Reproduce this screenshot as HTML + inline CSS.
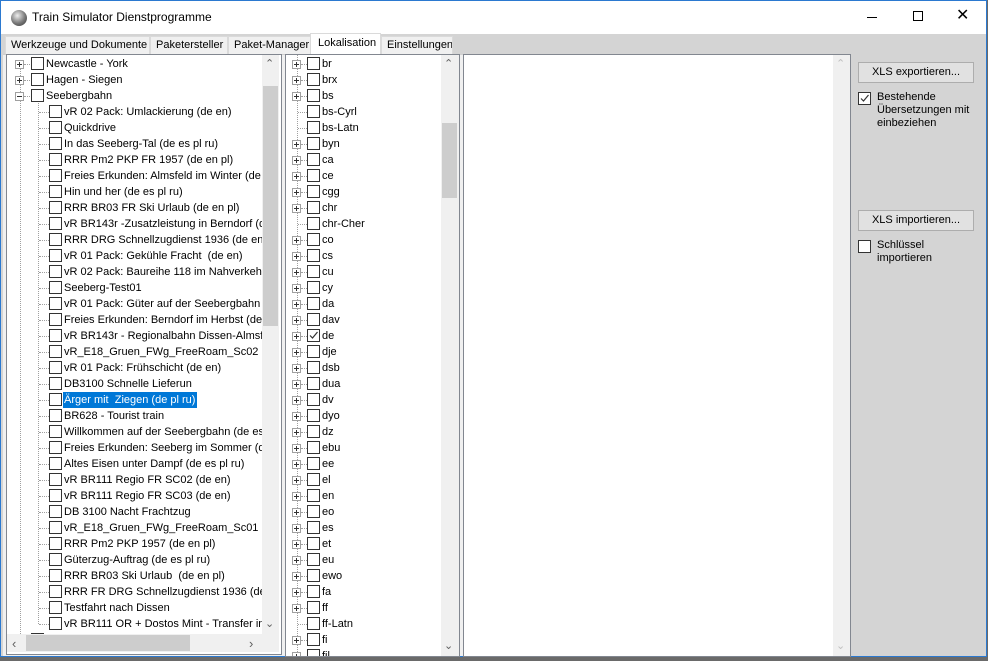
<!DOCTYPE html>
<html><head><meta charset="utf-8"><style>
*{margin:0;padding:0;box-sizing:border-box}
body{width:988px;height:661px;overflow:hidden;position:relative;background:#6a6a6a;font-family:"Liberation Sans",sans-serif;font-size:11px;color:#000}
.win{position:absolute;left:0;top:0;width:987px;height:657px;background:#d4d4d4;border:1px solid #2b79d0}
.title{position:absolute;left:0;top:0;width:985px;height:33px;background:#fff}
.abs{position:absolute}
.tab{position:absolute;top:35px;height:18px;line-height:17px;background:#f0f0f0;border:1px solid #dadada;border-bottom:none;padding-left:5px;font-size:11px;white-space:nowrap;overflow:hidden}
.panel{position:absolute;background:#fff;overflow:hidden}
.r{position:absolute;height:16px;line-height:16px;white-space:nowrap;left:0}
.cb{position:absolute;width:13px;height:13px;border:1px solid #333;background:#fff;top:1px}
.pl{position:absolute;width:9px;height:9px;border:1px solid #a0a0a0;background:#fff;top:4px}
.pl:before{content:"";position:absolute;left:1px;top:3px;width:5px;height:1px;background:#333}
.pl.p:after{content:"";position:absolute;left:3px;top:1px;width:1px;height:5px;background:#333}
.h{position:absolute;top:8px;height:1px;border-top:1px dotted #a0a0a0}
.v{position:absolute;width:1px;border-left:1px dotted #a0a0a0}
.sb{position:absolute;background:#f0f0f0}
.btn{position:absolute;left:857px;width:116px;height:21px;background:#e1e1e1;border:1px solid #adadad;text-align:center;line-height:19px;font-size:11px}
</style></head><body>
<div class="win">
<div class="title">
 <div class="abs" style="left:10px;top:9px;width:16px;height:16px;border-radius:50%;background:radial-gradient(circle at 40% 35%,#eee,#777 55%,#333)"></div>
 <div class="abs" style="left:31px;top:9px;font-size:12px">Train Simulator Dienstprogramme</div>
 <div class="abs" style="left:866px;top:16px;width:10px;height:1px;background:#000"></div>
 <div class="abs" style="left:912px;top:10px;width:10px;height:10px;border:1px solid #000"></div>
 <div class="abs" style="left:955px;top:7px;font-size:16px;line-height:16px">&#x2715;</div>
</div>
<div class="tab" style="left:4px;width:145px">Werkzeuge und Dokumente</div>
<div class="tab" style="left:149px;width:78px">Paketersteller</div>
<div class="tab" style="left:227px;width:83px">Paket-Manager</div>
<div class="tab" style="left:309px;top:32px;height:22px;width:71px;background:#fff;line-height:19px;padding-left:7px">Lokalisation</div>
<div class="tab" style="left:380px;width:72px">Einstellungen</div>
<div class="abs" style="left:2px;top:53px;width:846px;height:602px;background:#f0f0f0;border-top:1px solid #cfcfcf"></div>

<!-- left tree -->
<div class="abs" style="left:5px;top:53px;width:276px;height:601px;border:1px solid #828790;background:#fff"></div>
<div class="panel" style="left:6px;top:54px;width:255px;height:579px">
 <div class="v" style="left:13px;top:13px;height:570px"></div>
 <div class="v" style="left:31px;top:45px;height:524px"></div>
 <div class="r" style="top:1px"><span class="pl p" style="left:8px"></span><span class="h" style="left:17px;width:6px"></span><span class="cb" style="left:24px"></span><span style="position:absolute;left:39px">Newcastle - York</span></div>
 <div class="r" style="top:17px"><span class="pl p" style="left:8px"></span><span class="h" style="left:17px;width:6px"></span><span class="cb" style="left:24px"></span><span style="position:absolute;left:39px">Hagen - Siegen</span></div>
 <div class="r" style="top:33px"><span class="pl" style="left:8px"></span><span class="h" style="left:17px;width:6px"></span><span class="cb" style="left:24px"></span><span style="position:absolute;left:39px">Seebergbahn</span></div>
 <div class="r" style="top:49px"><span class="h" style="left:32px;width:10px"></span><span class="cb" style="left:42px"></span><span style="position:absolute;left:57px">vR 02 Pack: Umlackierung (de en)</span></div>
 <div class="r" style="top:65px"><span class="h" style="left:32px;width:10px"></span><span class="cb" style="left:42px"></span><span style="position:absolute;left:57px">Quickdrive</span></div>
 <div class="r" style="top:81px"><span class="h" style="left:32px;width:10px"></span><span class="cb" style="left:42px"></span><span style="position:absolute;left:57px">In das Seeberg-Tal (de es pl ru)</span></div>
 <div class="r" style="top:97px"><span class="h" style="left:32px;width:10px"></span><span class="cb" style="left:42px"></span><span style="position:absolute;left:57px">RRR Pm2 PKP FR 1957 (de en pl)</span></div>
 <div class="r" style="top:113px"><span class="h" style="left:32px;width:10px"></span><span class="cb" style="left:42px"></span><span style="position:absolute;left:57px">Freies Erkunden: Almsfeld im Winter (de en)</span></div>
 <div class="r" style="top:129px"><span class="h" style="left:32px;width:10px"></span><span class="cb" style="left:42px"></span><span style="position:absolute;left:57px">Hin und her (de es pl ru)</span></div>
 <div class="r" style="top:145px"><span class="h" style="left:32px;width:10px"></span><span class="cb" style="left:42px"></span><span style="position:absolute;left:57px">RRR BR03 FR Ski Urlaub (de en pl)</span></div>
 <div class="r" style="top:161px"><span class="h" style="left:32px;width:10px"></span><span class="cb" style="left:42px"></span><span style="position:absolute;left:57px">vR BR143r -Zusatzleistung in Berndorf (de en)</span></div>
 <div class="r" style="top:177px"><span class="h" style="left:32px;width:10px"></span><span class="cb" style="left:42px"></span><span style="position:absolute;left:57px">RRR DRG Schnellzugdienst 1936 (de en pl)</span></div>
 <div class="r" style="top:193px"><span class="h" style="left:32px;width:10px"></span><span class="cb" style="left:42px"></span><span style="position:absolute;left:57px">vR 01 Pack: Gekühle Fracht&nbsp; (de en)</span></div>
 <div class="r" style="top:209px"><span class="h" style="left:32px;width:10px"></span><span class="cb" style="left:42px"></span><span style="position:absolute;left:57px">vR 02 Pack: Baureihe 118 im Nahverkehr</span></div>
 <div class="r" style="top:225px"><span class="h" style="left:32px;width:10px"></span><span class="cb" style="left:42px"></span><span style="position:absolute;left:57px">Seeberg-Test01</span></div>
 <div class="r" style="top:241px"><span class="h" style="left:32px;width:10px"></span><span class="cb" style="left:42px"></span><span style="position:absolute;left:57px">vR 01 Pack: Güter auf der Seebergbahn (de</span></div>
 <div class="r" style="top:257px"><span class="h" style="left:32px;width:10px"></span><span class="cb" style="left:42px"></span><span style="position:absolute;left:57px">Freies Erkunden: Berndorf im Herbst (de en)</span></div>
 <div class="r" style="top:273px"><span class="h" style="left:32px;width:10px"></span><span class="cb" style="left:42px"></span><span style="position:absolute;left:57px">vR BR143r - Regionalbahn Dissen-Almsfeld</span></div>
 <div class="r" style="top:289px"><span class="h" style="left:32px;width:10px"></span><span class="cb" style="left:42px"></span><span style="position:absolute;left:57px">vR_E18_Gruen_FWg_FreeRoam_Sc02</span></div>
 <div class="r" style="top:305px"><span class="h" style="left:32px;width:10px"></span><span class="cb" style="left:42px"></span><span style="position:absolute;left:57px">vR 01 Pack: Frühschicht (de en)</span></div>
 <div class="r" style="top:321px"><span class="h" style="left:32px;width:10px"></span><span class="cb" style="left:42px"></span><span style="position:absolute;left:57px">DB3100 Schnelle Lieferun</span></div>
 <div class="r" style="top:337px"><span class="h" style="left:32px;width:10px"></span><span class="cb" style="left:42px"></span><span style="position:absolute;left:56px;background:#0078d7;color:#fff;padding:0 2px 0 1px">Ärger mit&nbsp; Ziegen (de pl ru)</span></div>
 <div class="r" style="top:353px"><span class="h" style="left:32px;width:10px"></span><span class="cb" style="left:42px"></span><span style="position:absolute;left:57px">BR628 - Tourist train</span></div>
 <div class="r" style="top:369px"><span class="h" style="left:32px;width:10px"></span><span class="cb" style="left:42px"></span><span style="position:absolute;left:57px">Willkommen auf der Seebergbahn (de es pl ru)</span></div>
 <div class="r" style="top:385px"><span class="h" style="left:32px;width:10px"></span><span class="cb" style="left:42px"></span><span style="position:absolute;left:57px">Freies Erkunden: Seeberg im Sommer (de en)</span></div>
 <div class="r" style="top:401px"><span class="h" style="left:32px;width:10px"></span><span class="cb" style="left:42px"></span><span style="position:absolute;left:57px">Altes Eisen unter Dampf (de es pl ru)</span></div>
 <div class="r" style="top:417px"><span class="h" style="left:32px;width:10px"></span><span class="cb" style="left:42px"></span><span style="position:absolute;left:57px">vR BR111 Regio FR SC02 (de en)</span></div>
 <div class="r" style="top:433px"><span class="h" style="left:32px;width:10px"></span><span class="cb" style="left:42px"></span><span style="position:absolute;left:57px">vR BR111 Regio FR SC03 (de en)</span></div>
 <div class="r" style="top:449px"><span class="h" style="left:32px;width:10px"></span><span class="cb" style="left:42px"></span><span style="position:absolute;left:57px">DB 3100 Nacht Frachtzug</span></div>
 <div class="r" style="top:465px"><span class="h" style="left:32px;width:10px"></span><span class="cb" style="left:42px"></span><span style="position:absolute;left:57px">vR_E18_Gruen_FWg_FreeRoam_Sc01</span></div>
 <div class="r" style="top:481px"><span class="h" style="left:32px;width:10px"></span><span class="cb" style="left:42px"></span><span style="position:absolute;left:57px">RRR Pm2 PKP 1957 (de en pl)</span></div>
 <div class="r" style="top:497px"><span class="h" style="left:32px;width:10px"></span><span class="cb" style="left:42px"></span><span style="position:absolute;left:57px">Güterzug-Auftrag (de es pl ru)</span></div>
 <div class="r" style="top:513px"><span class="h" style="left:32px;width:10px"></span><span class="cb" style="left:42px"></span><span style="position:absolute;left:57px">RRR BR03 Ski Urlaub&nbsp; (de en pl)</span></div>
 <div class="r" style="top:529px"><span class="h" style="left:32px;width:10px"></span><span class="cb" style="left:42px"></span><span style="position:absolute;left:57px">RRR FR DRG Schnellzugdienst 1936 (de en pl)</span></div>
 <div class="r" style="top:545px"><span class="h" style="left:32px;width:10px"></span><span class="cb" style="left:42px"></span><span style="position:absolute;left:57px">Testfahrt nach Dissen</span></div>
 <div class="r" style="top:561px"><span class="h" style="left:32px;width:10px"></span><span class="cb" style="left:42px"></span><span style="position:absolute;left:57px">vR BR111 OR + Dostos Mint - Transfer in</span></div>
 <div class="r" style="top:577px"><span class="pl p" style="left:8px"></span><span class="cb" style="left:24px"></span><span style="position:absolute;left:39px">Heilbronn - Hamburg</span></div>
</div>
<div class="sb" style="left:261px;top:54px;width:17px;height:579px"></div>
<div class="abs" style="left:262px;top:85px;width:15px;height:240px;background:#cdcdcd"></div>
<div class="abs" style="left:264px;top:56px;font-size:11px;color:#606060">&#8963;</div>
<div class="abs" style="left:264px;top:616px;font-size:11px;color:#606060">&#8964;</div>
<div class="sb" style="left:6px;top:633px;width:272px;height:18px"></div>
<div class="abs" style="left:25px;top:634px;width:164px;height:16px;background:#cdcdcd"></div>
<div class="abs" style="left:11px;top:635px;font-size:13px;color:#606060">&#8249;</div>
<div class="abs" style="left:248px;top:635px;font-size:13px;color:#606060">&#8250;</div>

<!-- middle tree -->
<div class="abs" style="left:284px;top:53px;width:175px;height:603px;border:1px solid #828790;background:#fff"></div>
<div class="panel" style="left:285px;top:54px;width:155px;height:601px">
 <div class="v" style="left:11px;top:0px;height:601px"></div>
 <div class="r" style="top:1px"><span class="pl p" style="left:6px"></span><span class="h" style="left:15px;width:6px"></span><span class="cb" style="left:21px"></span><span style="position:absolute;left:36px">br</span></div>
 <div class="r" style="top:17px"><span class="pl p" style="left:6px"></span><span class="h" style="left:15px;width:6px"></span><span class="cb" style="left:21px"></span><span style="position:absolute;left:36px">brx</span></div>
 <div class="r" style="top:33px"><span class="pl p" style="left:6px"></span><span class="h" style="left:15px;width:6px"></span><span class="cb" style="left:21px"></span><span style="position:absolute;left:36px">bs</span></div>
 <div class="r" style="top:49px"><span class="h" style="left:12px;width:9px"></span><span class="cb" style="left:21px"></span><span style="position:absolute;left:36px">bs-Cyrl</span></div>
 <div class="r" style="top:65px"><span class="h" style="left:12px;width:9px"></span><span class="cb" style="left:21px"></span><span style="position:absolute;left:36px">bs-Latn</span></div>
 <div class="r" style="top:81px"><span class="pl p" style="left:6px"></span><span class="h" style="left:15px;width:6px"></span><span class="cb" style="left:21px"></span><span style="position:absolute;left:36px">byn</span></div>
 <div class="r" style="top:97px"><span class="pl p" style="left:6px"></span><span class="h" style="left:15px;width:6px"></span><span class="cb" style="left:21px"></span><span style="position:absolute;left:36px">ca</span></div>
 <div class="r" style="top:113px"><span class="pl p" style="left:6px"></span><span class="h" style="left:15px;width:6px"></span><span class="cb" style="left:21px"></span><span style="position:absolute;left:36px">ce</span></div>
 <div class="r" style="top:129px"><span class="pl p" style="left:6px"></span><span class="h" style="left:15px;width:6px"></span><span class="cb" style="left:21px"></span><span style="position:absolute;left:36px">cgg</span></div>
 <div class="r" style="top:145px"><span class="pl p" style="left:6px"></span><span class="h" style="left:15px;width:6px"></span><span class="cb" style="left:21px"></span><span style="position:absolute;left:36px">chr</span></div>
 <div class="r" style="top:161px"><span class="h" style="left:12px;width:9px"></span><span class="cb" style="left:21px"></span><span style="position:absolute;left:36px">chr-Cher</span></div>
 <div class="r" style="top:177px"><span class="pl p" style="left:6px"></span><span class="h" style="left:15px;width:6px"></span><span class="cb" style="left:21px"></span><span style="position:absolute;left:36px">co</span></div>
 <div class="r" style="top:193px"><span class="pl p" style="left:6px"></span><span class="h" style="left:15px;width:6px"></span><span class="cb" style="left:21px"></span><span style="position:absolute;left:36px">cs</span></div>
 <div class="r" style="top:209px"><span class="pl p" style="left:6px"></span><span class="h" style="left:15px;width:6px"></span><span class="cb" style="left:21px"></span><span style="position:absolute;left:36px">cu</span></div>
 <div class="r" style="top:225px"><span class="pl p" style="left:6px"></span><span class="h" style="left:15px;width:6px"></span><span class="cb" style="left:21px"></span><span style="position:absolute;left:36px">cy</span></div>
 <div class="r" style="top:241px"><span class="pl p" style="left:6px"></span><span class="h" style="left:15px;width:6px"></span><span class="cb" style="left:21px"></span><span style="position:absolute;left:36px">da</span></div>
 <div class="r" style="top:257px"><span class="pl p" style="left:6px"></span><span class="h" style="left:15px;width:6px"></span><span class="cb" style="left:21px"></span><span style="position:absolute;left:36px">dav</span></div>
 <div class="r" style="top:273px"><span class="pl p" style="left:6px"></span><span class="h" style="left:15px;width:6px"></span><span class="cb" style="left:21px"><svg width="11" height="11" style="position:absolute;left:0;top:0"><path d="M2 5.5 L4.5 8 L9.5 2" fill="none" stroke="#333" stroke-width="1.2"/></svg></span><span style="position:absolute;left:36px">de</span></div>
 <div class="r" style="top:289px"><span class="pl p" style="left:6px"></span><span class="h" style="left:15px;width:6px"></span><span class="cb" style="left:21px"></span><span style="position:absolute;left:36px">dje</span></div>
 <div class="r" style="top:305px"><span class="pl p" style="left:6px"></span><span class="h" style="left:15px;width:6px"></span><span class="cb" style="left:21px"></span><span style="position:absolute;left:36px">dsb</span></div>
 <div class="r" style="top:321px"><span class="pl p" style="left:6px"></span><span class="h" style="left:15px;width:6px"></span><span class="cb" style="left:21px"></span><span style="position:absolute;left:36px">dua</span></div>
 <div class="r" style="top:337px"><span class="pl p" style="left:6px"></span><span class="h" style="left:15px;width:6px"></span><span class="cb" style="left:21px"></span><span style="position:absolute;left:36px">dv</span></div>
 <div class="r" style="top:353px"><span class="pl p" style="left:6px"></span><span class="h" style="left:15px;width:6px"></span><span class="cb" style="left:21px"></span><span style="position:absolute;left:36px">dyo</span></div>
 <div class="r" style="top:369px"><span class="pl p" style="left:6px"></span><span class="h" style="left:15px;width:6px"></span><span class="cb" style="left:21px"></span><span style="position:absolute;left:36px">dz</span></div>
 <div class="r" style="top:385px"><span class="pl p" style="left:6px"></span><span class="h" style="left:15px;width:6px"></span><span class="cb" style="left:21px"></span><span style="position:absolute;left:36px">ebu</span></div>
 <div class="r" style="top:401px"><span class="pl p" style="left:6px"></span><span class="h" style="left:15px;width:6px"></span><span class="cb" style="left:21px"></span><span style="position:absolute;left:36px">ee</span></div>
 <div class="r" style="top:417px"><span class="pl p" style="left:6px"></span><span class="h" style="left:15px;width:6px"></span><span class="cb" style="left:21px"></span><span style="position:absolute;left:36px">el</span></div>
 <div class="r" style="top:433px"><span class="pl p" style="left:6px"></span><span class="h" style="left:15px;width:6px"></span><span class="cb" style="left:21px"></span><span style="position:absolute;left:36px">en</span></div>
 <div class="r" style="top:449px"><span class="pl p" style="left:6px"></span><span class="h" style="left:15px;width:6px"></span><span class="cb" style="left:21px"></span><span style="position:absolute;left:36px">eo</span></div>
 <div class="r" style="top:465px"><span class="pl p" style="left:6px"></span><span class="h" style="left:15px;width:6px"></span><span class="cb" style="left:21px"></span><span style="position:absolute;left:36px">es</span></div>
 <div class="r" style="top:481px"><span class="pl p" style="left:6px"></span><span class="h" style="left:15px;width:6px"></span><span class="cb" style="left:21px"></span><span style="position:absolute;left:36px">et</span></div>
 <div class="r" style="top:497px"><span class="pl p" style="left:6px"></span><span class="h" style="left:15px;width:6px"></span><span class="cb" style="left:21px"></span><span style="position:absolute;left:36px">eu</span></div>
 <div class="r" style="top:513px"><span class="pl p" style="left:6px"></span><span class="h" style="left:15px;width:6px"></span><span class="cb" style="left:21px"></span><span style="position:absolute;left:36px">ewo</span></div>
 <div class="r" style="top:529px"><span class="pl p" style="left:6px"></span><span class="h" style="left:15px;width:6px"></span><span class="cb" style="left:21px"></span><span style="position:absolute;left:36px">fa</span></div>
 <div class="r" style="top:545px"><span class="pl p" style="left:6px"></span><span class="h" style="left:15px;width:6px"></span><span class="cb" style="left:21px"></span><span style="position:absolute;left:36px">ff</span></div>
 <div class="r" style="top:561px"><span class="h" style="left:12px;width:9px"></span><span class="cb" style="left:21px"></span><span style="position:absolute;left:36px">ff-Latn</span></div>
 <div class="r" style="top:577px"><span class="pl p" style="left:6px"></span><span class="h" style="left:15px;width:6px"></span><span class="cb" style="left:21px"></span><span style="position:absolute;left:36px">fi</span></div>
 <div class="r" style="top:593px"><span class="pl p" style="left:6px"></span><span class="h" style="left:15px;width:6px"></span><span class="cb" style="left:21px"></span><span style="position:absolute;left:36px">fil</span></div>
</div>
<div class="sb" style="left:440px;top:54px;width:18px;height:601px"></div>
<div class="abs" style="left:441px;top:122px;width:15px;height:75px;background:#cdcdcd"></div>
<div class="abs" style="left:443px;top:56px;font-size:11px;color:#606060">&#8963;</div>
<div class="abs" style="left:443px;top:638px;font-size:11px;color:#606060">&#8964;</div>

<!-- text area -->
<div class="abs" style="left:462px;top:53px;width:388px;height:603px;border:1px solid #828790;background:#fff"></div>
<div class="sb" style="left:832px;top:54px;width:17px;height:601px"></div>
<div class="abs" style="left:835px;top:56px;font-size:11px;color:#c0c0c0">&#8963;</div>
<div class="abs" style="left:835px;top:638px;font-size:11px;color:#c0c0c0">&#8964;</div>

<!-- right panel -->
<div class="btn" style="top:61px">XLS exportieren...</div>
<div class="cb" style="left:857px;top:91px"><svg width="11" height="11" style="position:absolute;left:0;top:0"><path d="M2 5.5 L4.5 8 L9.5 2" fill="none" stroke="#333" stroke-width="1.2"/></svg></div>
<div class="abs" style="left:876px;top:90px;line-height:13px">Bestehende<br>Übersetzungen mit<br>einbeziehen</div>
<div class="btn" style="top:209px">XLS importieren...</div>
<div class="cb" style="left:857px;top:239px"></div>
<div class="abs" style="left:876px;top:238px;line-height:13px">Schlüssel<br>importieren</div>
</div>
</body></html>
